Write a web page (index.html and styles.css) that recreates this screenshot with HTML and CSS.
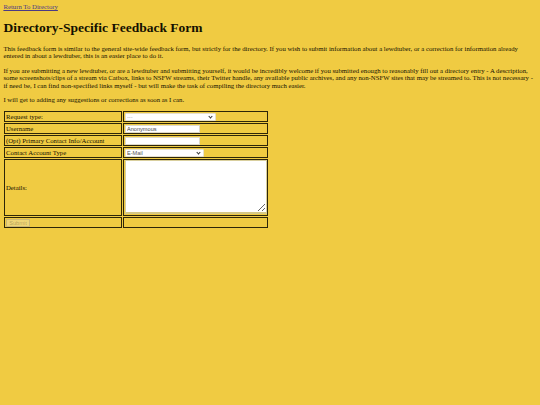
FILE: index.html
```html
<!DOCTYPE html>
<html lang="en">
<head>
<meta charset="utf-8">
<title>Directory-Specific Feedback Form</title>
<link rel="stylesheet" href="styles.css">
</head>
<body>
<a class="back" href="#">Return To Directory</a>
<h1 class="title">Directory-Specific Feedback Form</h1>
<p class="text">This feedback form is similar to the general site-wide feedback form, but strictly for the directory. If you wish to submit information about a lewdtuber, or a correction for information already entered in about a lewdtuber, this is an easier place to do it.</p>
<p class="text">If you are submitting a new lewdtuber, or are a lewdtuber and submitting yourself, it would be incredibly welcome if you submitted enough to reasonably fill out a directory entry - A description, some screenshots/clips of a stream via Catbox, links to NSFW streams, their Twitter handle, any available public archives, and any non-NSFW sites that may be streamed to. This is not necessary - if need be, I can find non-specified links myself - but will make the task of compiling the directory much easier.</p>
<p class="text">I will get to adding any suggestions or corrections as soon as I can.</p>
<form class="form">
<table class="grid">
<tr>
<td class="label">Request type:</td>
<td class="field"><span class="pick pick-type"><select class="sel"><option>---</option><option>New Lewdtuber</option><option>Correction</option></select></span></td>
</tr>
<tr>
<td class="label">Username</td>
<td class="field"><input class="txt" type="text" value="Anonymous"></td>
</tr>
<tr>
<td class="label">(Opt) Primary Contact Info/Account</td>
<td class="field"><input class="txt" type="text"></td>
</tr>
<tr>
<td class="label">Contact Account Type</td>
<td class="field"><span class="pick pick-contact"><select class="sel sel-dark"><option>E-Mail</option><option>Twitter</option><option>Discord</option></select></span></td>
</tr>
<tr>
<td class="label">Details:</td>
<td class="field"><textarea class="area"></textarea></td>
</tr>
<tr>
<td class="label"><button class="btn" type="submit" disabled>Submit</button></td>
<td class="field"></td>
</tr>
</table>
</form>
</body>
</html>
```

FILE: styles.css
```css
html {
  background: #f0cb42;
}
body {
  margin: 3.4px;
  background: #f0cb42;
  color: #141000;
  font-family: "Liberation Serif", "Times New Roman", serif;
  font-size: 6.75px;
  line-height: 7.7px;
}
.back {
  color: #4a3a86;
  text-decoration: underline;
}
.title {
  font-size: 13.5px;
  line-height: 15.5px;
  margin: 9px 0;
  font-weight: bold;
}
.text {
  margin: 6.6px 0;
}
.form {
  margin: 0;
}
.grid {
  border-collapse: separate;
  border-spacing: 1px;
  margin-left: -0.4px;
  margin-top: -0.6px;
}
.grid td {
  border: 1px solid #2e2608;
  padding: 0 1px;
  height: 9px;
  vertical-align: middle;
  font-size: 6.75px;
  line-height: 7.7px;
}
.grid .field {
  padding: 0 0 0 1px;
}
.label {
  width: 114px;
}
.field {
  width: 142px;
}
.sel,
.txt,
.area,
.btn {
  font-family: "Liberation Sans", Arial, sans-serif;
  font-size: 5.6px;
  box-sizing: border-box;
  margin: 0;
}
.pick {
  position: relative;
  display: block;
  height: 8px;
}
.pick-type {
  width: 91px;
}
.pick-contact {
  width: 79px;
}
.pick::after {
  content: "";
  position: absolute;
  right: 4px;
  top: 2.5px;
  width: 2px;
  height: 2px;
  border-right: 1px solid #333;
  border-bottom: 1px solid #333;
  transform: rotate(45deg);
}
.sel {
  appearance: none;
  -webkit-appearance: none;
  display: block;
  width: 100%;
  height: 8px;
  padding: 0 1px;
  border: 1px solid #e6e0cc;
  border-radius: 1px;
  background: #fff;
  color: #aaa;
  line-height: 6px;
}
.sel-dark {
  color: #555;
}
.txt {
  display: block;
  width: 75px;
  height: 8px;
  padding: 0 1px;
  border: 1px solid #e0dac6;
  background: #fff;
  color: #444;
}
.grid .area {
  display: block;
  width: 142px;
  height: 54px;
  margin: 0 0 1px 0;
  border: 1px solid #d9cf9e;
  border-bottom: 2px solid #d6c886;
  background: #fff;
  padding: 1px;
  resize: both;
}
.btn {
  display: block;
  width: 24px;
  height: 8px;
  padding: 0;
  border: 1px solid rgba(118, 118, 118, 0.3);
  border-radius: 1px;
  background: rgba(239, 239, 239, 0.3);
  color: rgba(16, 16, 16, 0.3);
}
```
